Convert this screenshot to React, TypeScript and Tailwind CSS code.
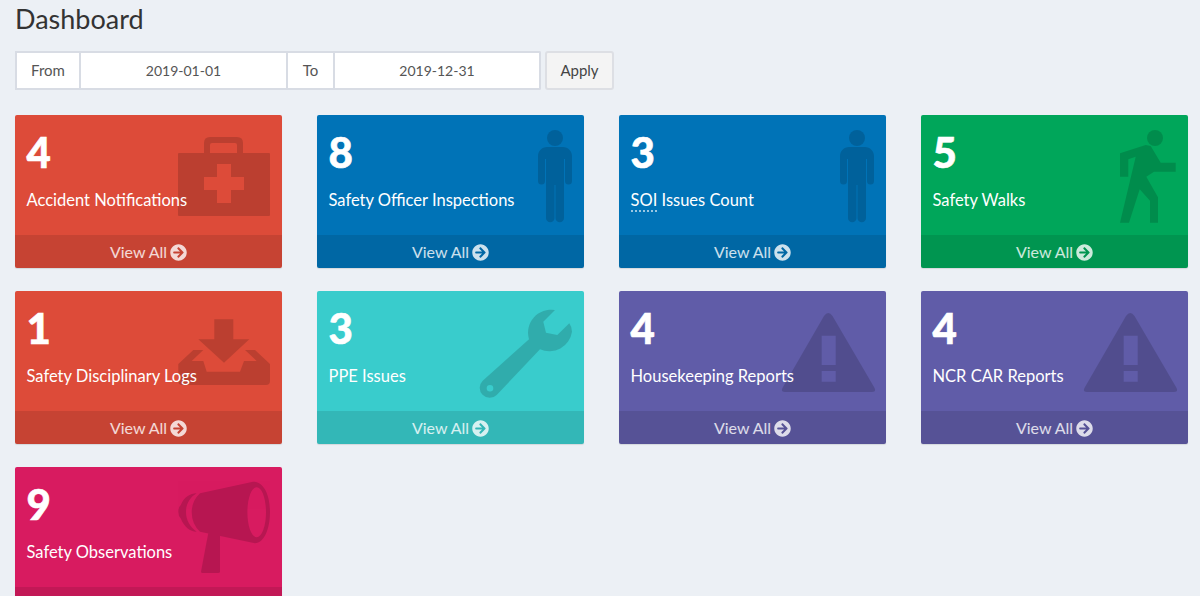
import type { ReactNode } from "react";
import { FaArrowCircleRight } from "react-icons/fa";

// all icons share one 120x120 box in the top right corner of the card
const Medkit = () => (
  <path
    fillRule="evenodd"
    d="M42 38V28Q42 22 48 22H75Q81 22 81 28V38H107Q108 38 108 39V100Q108 101 107 101H17Q16 101 16 100V39Q16 38 17 38ZM48 38H75V30Q75 28 73 28H50Q48 28 48 30ZM55 49V62H42V75H55V88H69V75H82V62H69V49Z"
  />
);

const Man = () => (
  <>
    <circle cx="91" cy="23" r="8" />
    <path d="M83 32H99C104 32 108 36 108 41V66a3.5 3.5 0 0 1-7 0V44h-1v59a4.25 4.25 0 0 1-8.5 0V70h-1v33a4.25 4.25 0 0 1-8.5 0V44h-1v22a3.5 3.5 0 0 1-7 0V41C74 36 78 32 83 32Z" />
  </>
);

const Walk = () => (
  <>
    <circle cx="87" cy="23" r="8" />
    <path d="M52 38.3L77.7 30L82.7 31L92.7 47.7H107.7V56.7H86L78.3 61.7L90 82.3V107.7H82V85.7L71.7 74.3L61 107.7H52L67.7 41.7L60.3 44.3V61.7H52Z" />
  </>
);

const Inbox = () => (
  <>
    <path d="M52.3 28.3H71.3V48.3H87.3L62 71.7L36.3 48.3H52.3Z" />
    <path d="M16.3 73L31.3 59H41.3L29.7 70H41.3L44.7 80.7H78L82 70H94.7L83 59H93L108 73V90Q108 94 104 94H20Q16.3 94 16.3 90Z" />
  </>
);

const Wrench = () => (
  <path
    fillRule="evenodd"
    d="M91 19A23 23 0 0 0 65 48.3L18.7 89.7A10 10 0 0 0 32.7 104L76 58.3A23 23 0 0 0 108 40.7Q108 36 105.3 32.3L93.3 44L82 41.7L79.3 30.7ZM26 94A3.3 3.3 0 1 0 26 100.6A3.3 3.3 0 1 0 26 94Z"
  />
);

const Warning = () => (
  <path
    fillRule="evenodd"
    d="M58 25Q62.3 19 66.5 25L108 96Q111 101 106 101H19Q14 101 17 96ZM55.7 44.7V74H69.7V44.7ZM55.7 80V90.7H69.7V80Z"
  />
);

const Bullhorn = () => (
  <>
    <path
      fillRule="evenodd"
      d="M91 14.7L38 26.3Q29.7 34 29.7 45Q29.7 57 38 64.7L93 76.3C102 76 108 62 108 45.3C108 28 102 14.7 91 14.7ZM94.7 20.3C89.5 20.3 85.4 31.5 85.4 45.3C85.4 59 89.5 70.3 94.7 70.3C99.9 70.3 104 59 104 45.3C104 31.5 99.9 20.3 94.7 20.3Z"
    />
    <path d="M46.3 66L58 68V104.5Q58 106 56 106H40.5Q39 106 39 104.5Z" />
    <path d="M34.7 26.3C28 26.5 22 30 18.8 38Q16.3 40 16.3 44.7Q16.3 49 18.8 51.5C22 60 28 64.5 34.7 64.7C28 60 24 53 24 45C24 37 28 30 34.7 26.3Z" />
  </>
);

type Box = {
  id: string;
  count: number;
  label: ReactNode;
  color: string;
  icon: ReactNode;
};

const boxes: Box[] = [
  { id: "accident", count: 4, label: "Accident Notifications", color: "bg-[#dd4b39]", icon: <Medkit /> },
  { id: "officer", count: 8, label: "Safety Officer Inspections", color: "bg-[#0073b7]", icon: <Man /> },
  {
    id: "soi",
    count: 3,
    label: (
      <>
        <abbr className="border-b-2 border-dotted border-white/60 no-underline">SOI</abbr> Issues Count
      </>
    ),
    color: "bg-[#0073b7]",
    icon: <Man />,
  },
  { id: "walks", count: 5, label: "Safety Walks", color: "bg-[#00a65a]", icon: <Walk /> },
  { id: "logs", count: 1, label: "Safety Disciplinary Logs", color: "bg-[#dd4b39]", icon: <Inbox /> },
  { id: "ppe", count: 3, label: "PPE Issues", color: "bg-[#39cccc]", icon: <Wrench /> },
  { id: "housekeeping", count: 4, label: "Housekeeping Reports", color: "bg-[#605ca8]", icon: <Warning /> },
  { id: "ncr", count: 4, label: "NCR CAR Reports", color: "bg-[#605ca8]", icon: <Warning /> },
  { id: "observations", count: 9, label: "Safety Observations", color: "bg-[#d81b60]", icon: <Bullhorn /> },
];

const SmallBox = ({ box }: { box: Box }) => (
  <div className={`${box.color} relative flex h-[153px] flex-col overflow-hidden rounded-[2px] text-white shadow-[0_1px_1px_rgba(0,0,0,0.1)]`}>
    <svg viewBox="0 0 120 120" className="absolute right-0 top-0 h-[120px] w-[120px]" fill="#000" opacity={0.15}>
      {box.icon}
    </svg>
    <div className="relative h-[120px] px-[11.5px] pt-[10px]">
      <div className="text-[42px] font-black leading-[54px] [-webkit-text-stroke:0.6px_white]">{box.count}</div>
      <div className="mt-[9px] text-[16.5px] leading-[24px]">{box.label}</div>
    </div>
    <div className="relative flex h-[33px] items-center justify-center gap-[3px] bg-black/10 pt-[1px] text-[16px] text-white/80">
      View All
      <FaArrowCircleRight className="h-[17px] w-[17px]" />
    </div>
  </div>
);

export default function App() {
  return (
    <div className="h-[596px] overflow-hidden bg-[#ecf0f5] px-[15px] font-['Lato','Liberation_Sans',sans-serif]">
      <h1 className="pt-[2px] text-[27px] leading-[33px] text-[#333]">Dashboard</h1>
      <div className="mt-[16px] flex h-[39px] text-[15px] text-[#555]">
        <span className="flex w-[66px] items-center justify-center border-2 border-[#d8dce4] bg-white">From</span>
        <span className="flex w-[207px] items-center justify-center border-2 border-l-0 border-[#d8dce4] bg-white text-[14px]">2019-01-01</span>
        <span className="flex w-[47px] items-center justify-center border-2 border-l-0 border-[#d8dce4] bg-white">To</span>
        <span className="flex w-[206px] items-center justify-center rounded-r-[2px] border-2 border-l-0 border-[#d8dce4] bg-white text-[14px]">2019-12-31</span>
        <button className="ml-[4px] w-[69px] rounded-[3px] border-2 border-[#dddfe4] bg-[#f4f4f4] text-[#444]">Apply</button>
      </div>
      <div className="mt-[25px] grid grid-cols-[repeat(4,267px)] gap-x-[35px] gap-y-[23px]">
        {boxes.map((box) => (
          <SmallBox key={box.id} box={box} />
        ))}
      </div>
    </div>
  );
}
